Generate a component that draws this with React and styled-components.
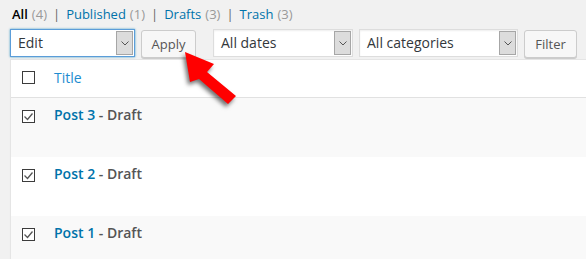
import React from "react";
import styled, { createGlobalStyle } from "styled-components";

const GlobalStyle = createGlobalStyle`
  html, body {
    margin: 0;
    padding: 0;
    background: #f1f1f1;
    overflow: hidden;
  }
  body {
    font-family: "Open Sans", "Liberation Sans", sans-serif;
    color: #444;
  }
`;

const Page = styled.div`
  position: relative;
  width: 586px;
  height: 259px;
  padding-left: 10px;
  box-sizing: border-box;
  overflow: hidden;
`;

const Views = styled.ul`
  display: flex;
  align-items: center;
  margin: 0;
  padding: 5px 0 0 2px;
  list-style: none;
  font-size: 13px;
  line-height: 17px;
  height: 24px;
  box-sizing: border-box;
  color: #666;
`;

const ViewLink = styled.a`
  color: ${p => (p.$current ? "#000" : "#0073aa")};
  font-weight: ${p => (p.$current ? 600 : 400)};
  text-decoration: none;
`;

const Count = styled.span`
  color: #999;
  font-weight: 400;
  margin-left: 4px;
`;

const Sep = styled.span`
  margin: 0 6px;
  color: #666;
`;

const Toolbar = styled.div`
  display: flex;
  align-items: flex-start;
  height: 30px;
  margin-top: 5px;
`;

const Actions = styled.div`
  display: flex;
  align-items: flex-start;
  gap: 6px;
  margin-right: ${p => p.$gap || 0}px;
`;

const SelectBox = styled.div`
  display: flex;
  align-items: stretch;
  box-sizing: border-box;
  width: ${p => p.$w}px;
  height: 28px;
  padding: 1px;
  background: #fff;
  border: 1px solid ${p => (p.$focus ? "#5b9dd9" : "#ddd")};
  box-shadow: ${p =>
    p.$focus ? "0 0 2px rgba(30, 140, 190, 0.8)" : "inset 0 1px 2px rgba(0, 0, 0, 0.07)"};
  font-size: 14px;
  color: #32373c;
`;

const SelectLabel = styled.span`
  flex: 1;
  padding-left: 6px;
  line-height: 24px;
  white-space: nowrap;
`;

const SelectArrow = styled.span`
  display: flex;
  align-items: center;
  justify-content: center;
  width: 17px;
  box-sizing: border-box;
  background: #dcdcdc;
  border: 1px solid #a6a6a6;
`;

const Button = styled.button`
  box-sizing: border-box;
  width: ${p => p.$w}px;
  height: 28px;
  margin: 1px 0 0;
  padding: 0;
  font-family: inherit;
  font-size: 13px;
  color: #555;
  background: #f7f7f7;
  border: 1px solid #ccc;
  border-radius: 3px;
  box-shadow: 0 1px 0 #ccc;
  cursor: pointer;
`;

const Table = styled.div`
  width: 600px;
  background: #fff;
  border: 1px solid #e5e5e5;
  box-shadow: 0 1px 1px rgba(0, 0, 0, 0.04);
`;

const Row = styled.div`
  display: grid;
  grid-template-columns: 33px 1fr;
  box-sizing: border-box;
  height: ${p => (p.$head ? 38 : 59)}px;
  background: ${p => (p.$alt ? "#f9f9f9" : "#fff")};
  border-bottom: ${p => (p.$head ? "1px solid #e1e1e1" : "none")};
`;

const CheckCell = styled.div`
  padding: ${p => (p.$head ? 11 : 12)}px 0 0 11px;
`;

const Box = styled.span`
  display: flex;
  align-items: center;
  justify-content: center;
  width: 13px;
  height: 13px;
  box-sizing: border-box;
  border: 1px solid #3c3c3c;
  background: #fff;

  svg {
    display: block;
  }
`;

const TitleCell = styled.div`
  padding: ${p => (p.$head ? 8 : 7)}px 10px 0;
  font-size: 14px;
  line-height: 20px;
`;

const HeadLink = styled.a`
  color: #1e8cd0;
  text-decoration: none;
`;

const PostLink = styled.a`
  color: #0073aa;
  font-weight: 600;
  text-decoration: none;
`;

const State = styled.span`
  color: #555;
  font-weight: 600;
`;

const Pointer = styled.svg`
  position: absolute;
  left: 170px;
  top: 40px;
  overflow: visible;
  filter: drop-shadow(-2px 3px 2px rgba(0, 0, 0, 0.55));
`;

function Chevron() {
  return (
    <svg width="8" height="5" viewBox="0 0 8 5">
      <polyline points="0.5,0.5 4,4 7.5,0.5" fill="none" stroke="#555" strokeWidth="1" />
    </svg>
  );
}

function Select({ label, w, focus }) {
  return (
    <SelectBox $w={w} $focus={focus}>
      <SelectLabel>{label}</SelectLabel>
      <SelectArrow>
        <Chevron />
      </SelectArrow>
    </SelectBox>
  );
}

function Check({ checked }) {
  return (
    <Box>
      {checked && (
        <svg width="11" height="11" viewBox="0 0 11 11">
          <polyline points="1.5,5.5 4.5,8.5 9.5,2.5" fill="none" stroke="#555" strokeWidth="1.3" />
        </svg>
      )}
    </Box>
  );
}

const views = [
  { label: "All", count: 4, current: true },
  { label: "Published", count: 1 },
  { label: "Drafts", count: 3 },
  { label: "Trash", count: 3 },
];

const posts = ["Post 3", "Post 2", "Post 1"];

export default function App() {
  return (
    <Page>
      <GlobalStyle />
      <Views>
        {views.map((v, i) => (
          <li key={v.label}>
            <ViewLink $current={v.current}>
              {v.label}
              <Count>({v.count})</Count>
            </ViewLink>
            {i < views.length - 1 && <Sep>|</Sep>}
          </li>
        ))}
      </Views>

      <Toolbar>
        <Actions $gap={17}>
          <Select label="Edit" w={125} focus />
          <Button $w={55}>Apply</Button>
        </Actions>
        <Actions>
          <Select label="All dates" w={140} />
          <Select label="All categories" w={159} />
          <Button $w={53}>Filter</Button>
        </Actions>
      </Toolbar>

      <Table>
        <Row $head>
          <CheckCell $head>
            <Check />
          </CheckCell>
          <TitleCell $head>
            <HeadLink>Title</HeadLink>
          </TitleCell>
        </Row>
        {posts.map((p, i) => (
          <Row key={p} $alt={i % 2 === 0}>
            <CheckCell>
              <Check checked />
            </CheckCell>
            <TitleCell>
              <PostLink>{p}</PostLink>
              <State> - Draft</State>
            </TitleCell>
          </Row>
        ))}
      </Table>

      <Pointer width="80" height="70" viewBox="170 40 80 70">
        <polygon
          points="185,52 214,64 207,72 236,96 228,104 199,79 190,82"
          fill="#ff0000"
        />
      </Pointer>
    </Page>
  );
}
